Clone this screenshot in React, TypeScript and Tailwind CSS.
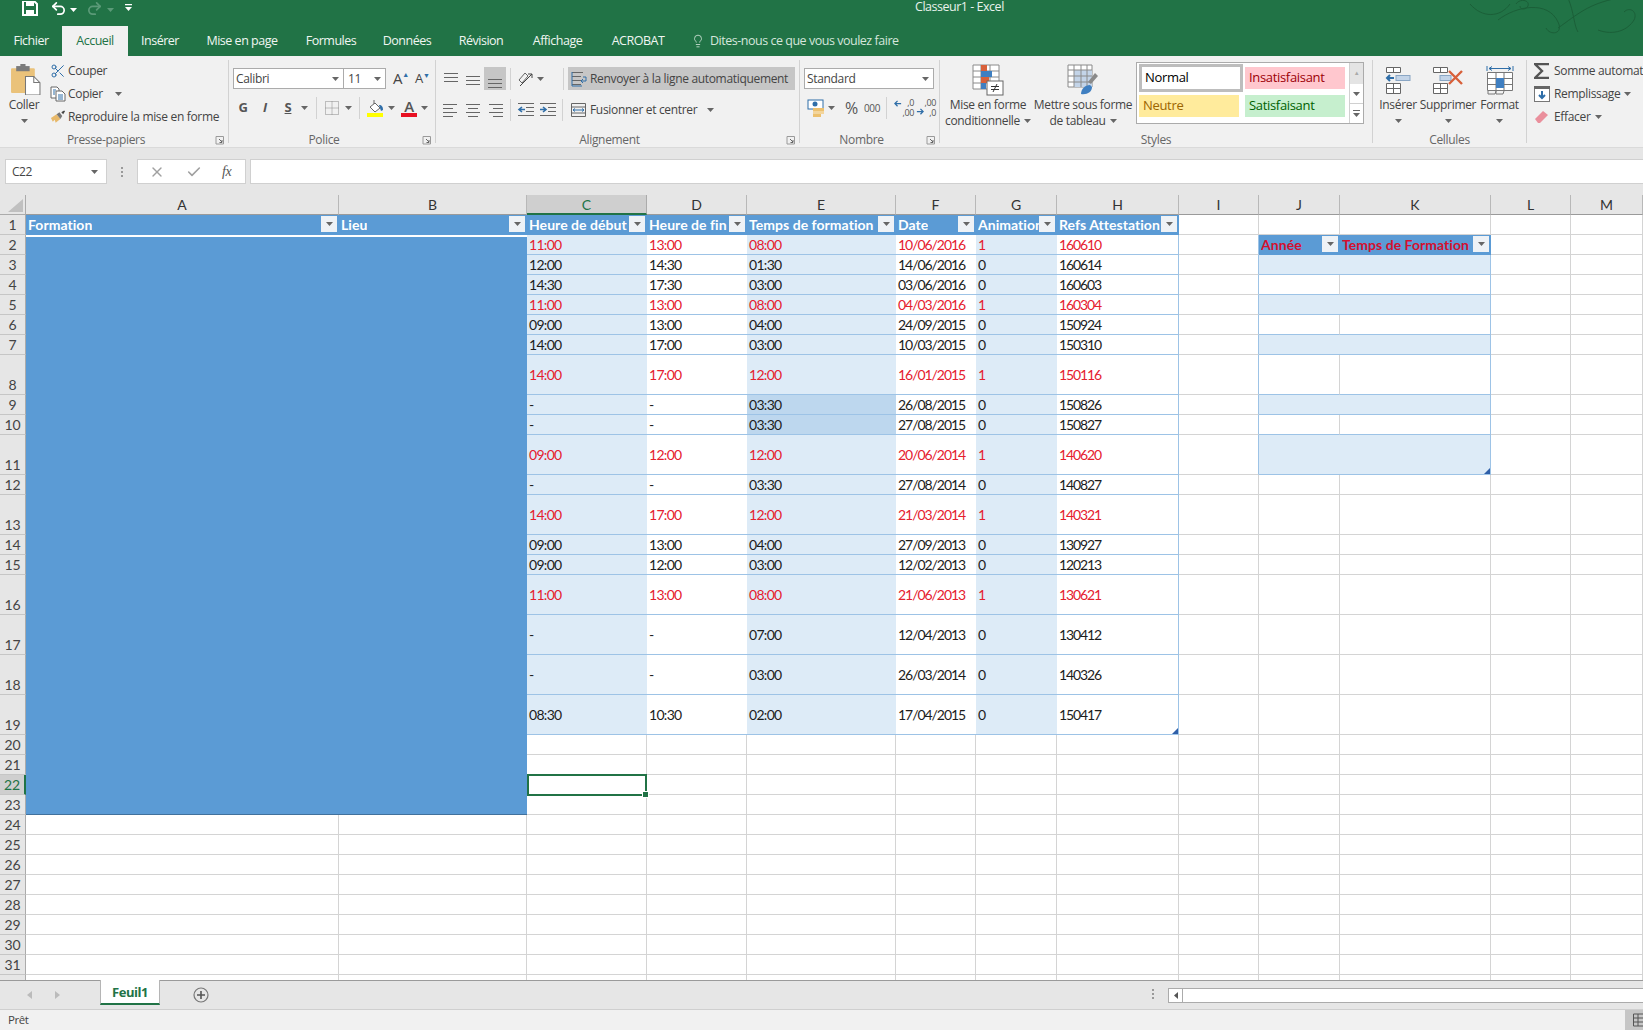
import { Check, Lightbulb, Scissors, Undo2, X } from "lucide-react";
import type { ReactNode } from "react";

type Row = { n: number; red?: boolean; vals: string[]; darkE?: boolean };

const rows: Row[] = [
  { n: 2, red: true, vals: ["11:00", "13:00", "08:00", "10/06/2016", "1", "160610"] },
  { n: 3, vals: ["12:00", "14:30", "01:30", "14/06/2016", "0", "160614"] },
  { n: 4, vals: ["14:30", "17:30", "03:00", "03/06/2016", "0", "160603"] },
  { n: 5, red: true, vals: ["11:00", "13:00", "08:00", "04/03/2016", "1", "160304"] },
  { n: 6, vals: ["09:00", "13:00", "04:00", "24/09/2015", "0", "150924"] },
  { n: 7, vals: ["14:00", "17:00", "03:00", "10/03/2015", "0", "150310"] },
  { n: 8, red: true, vals: ["14:00", "17:00", "12:00", "16/01/2015", "1", "150116"] },
  { n: 9, darkE: true, vals: ["-", "-", "03:30", "26/08/2015", "0", "150826"] },
  { n: 10, darkE: true, vals: ["-", "-", "03:30", "27/08/2015", "0", "150827"] },
  { n: 11, red: true, vals: ["09:00", "12:00", "12:00", "20/06/2014", "1", "140620"] },
  { n: 12, vals: ["-", "-", "03:30", "27/08/2014", "0", "140827"] },
  { n: 13, red: true, vals: ["14:00", "17:00", "12:00", "21/03/2014", "1", "140321"] },
  { n: 14, vals: ["09:00", "13:00", "04:00", "27/09/2013", "0", "130927"] },
  { n: 15, vals: ["09:00", "12:00", "03:00", "12/02/2013", "0", "120213"] },
  { n: 16, red: true, vals: ["11:00", "13:00", "08:00", "21/06/2013", "1", "130621"] },
  { n: 17, vals: ["-", "-", "07:00", "12/04/2013", "0", "130412"] },
  { n: 18, vals: ["-", "-", "03:00", "26/03/2014", "0", "140326"] },
  { n: 19, vals: ["08:30", "10:30", "02:00", "17/04/2015", "0", "150417"] },
];

const headers = ["Heure de début", "Heure de fin", "Temps de formation", "Date", "Animation", "Refs Attestation"];
const colLetters = ["A", "B", "C", "D", "E", "F", "G", "H", "I", "J", "K", "L", "M"];
// Lato digits run wider than the sheet's font, so each data column is tightened on its own
const colTracking = [
  "tracking-[-0.05em]",
  "tracking-[-0.05em]",
  "tracking-[-0.05em]",
  "tracking-[-0.075em]",
  "tracking-normal",
  "tracking-[-0.08em]",
];

const tabs = [
  { label: "Fichier", w: "w-[62px]" },
  { label: "Accueil", w: "w-[66px]", active: true },
  { label: "Insérer", w: "w-[64px]" },
  { label: "Mise en page", w: "w-[100px]" },
  { label: "Formules", w: "w-[78px]" },
  { label: "Données", w: "w-[74px]" },
  { label: "Révision", w: "w-[74px]" },
  { label: "Affichage", w: "w-[79px]" },
  { label: "ACROBAT", w: "w-[82px]" },
];

function Caret({ className = "" }: { className?: string }) {
  return (
    <svg width="7" height="4" viewBox="0 0 7 4" className={`shrink-0 ${className}`}>
      <path d="M0 0h7L3.5 4z" fill="#666" />
    </svg>
  );
}

function Launcher() {
  return (
    <svg width="16" height="10" viewBox="0 0 16 10" className="shrink-0">
      <path d="M4 1.5h7.5V9H4z" fill="none" stroke="#9a9a9a" />
      <path d="M7 4l3 3M10 5v2.5H7.5" fill="none" stroke="#666" />
    </svg>
  );
}

function Group({ w, label, launcher, children }: { w: string; label: string; launcher?: boolean; children: ReactNode }) {
  return (
    <section className={`${w} shrink-0 flex flex-col h-full pt-1`}>
      <div className="h-[72px] shrink-0 flex">{children}</div>
      <div className="h-4 shrink-0 flex items-center text-[12px] leading-4 text-[#666]">
        <span className="flex-1 text-center">{label}</span>
        {launcher && <Launcher />}
      </div>
    </section>
  );
}

function Sep() {
  return <div className="w-px shrink-0 my-1 bg-[#d2d2d2]" />;
}

function VSep({ className = "" }: { className?: string }) {
  return <div className={`w-px h-[22px] shrink-0 bg-[#d2d2d2] ${className}`} />;
}

function Lines({ widths, y = 4, gap = 4 }: { widths: [number, number][]; y?: number; gap?: number }) {
  return (
    <svg width="18" height="18" viewBox="0 0 18 18" className="shrink-0">
      {widths.map(([a, b], i) => (
        <path key={i} d={`M${a} ${y + i * gap + 0.5}H${b}`} stroke="#666" />
      ))}
    </svg>
  );
}

function PasteIcon() {
  return (
    <svg width="31" height="31" viewBox="0 0 30 30">
      <rect x="1" y="4" width="23" height="24" rx="1" fill="#eac27a" />
      <rect x="6" y="2" width="13" height="5" fill="#7b7b7b" />
      <rect x="10" y="0" width="5" height="4" fill="#7b7b7b" />
      <path d="M15 12h8l6 6v12H15z" fill="#fff" stroke="#777" />
      <path d="M23 12v6h6" fill="none" stroke="#777" />
    </svg>
  );
}

function CopyIcon() {
  return (
    <svg width="16" height="16" viewBox="0 0 16 16">
      <path d="M1 1h6l2 2v9H1z" fill="#fff" stroke="#666" />
      <path d="M6 5h6l3 3v7H6z" fill="#fff" stroke="#666" />
      <path d="M8 9h5M8 11h5M8 13h5M3 4h3M3 6h2M3 8h2" stroke="#2f6ea8" />
    </svg>
  );
}

function BrushIcon() {
  return (
    <svg width="17" height="16" viewBox="0 0 17 16">
      <path d="M1 9l6-4 4 5-5 4-1-3-2 2z" fill="#e8b96a" />
      <path d="M7 5l3-2 3 4-2 3z" fill="#777" />
      <path d="M12 3l3-2 1 1-2 3z" fill="#444" />
    </svg>
  );
}

function BordersIcon() {
  return (
    <svg width="16" height="16" viewBox="0 0 16 16">
      <path d="M1.5 1.5h13v13h-13zM8 1.5v13M1.5 8h13" fill="none" stroke="#888" strokeDasharray="1 1" />
    </svg>
  );
}

function FillIcon() {
  return (
    <svg width="17" height="18" viewBox="0 0 17 18">
      <path d="M7 1v4M3 8l5-4 5 5-5 4z" fill="#fff" stroke="#666" />
      <path d="M12 6c3 0 4 2 4 5l-2 1z" fill="#2f6ea8" />
      <rect x="0" y="14" width="16" height="4" fill="#ffff00" />
    </svg>
  );
}

function OrientIcon() {
  return (
    <svg width="18" height="18" viewBox="0 0 18 18">
      <path d="M3 10l6-7 3 3-6 7z" fill="none" stroke="#666" />
      <path d="M4 16L16 4M16 4h-4M16 4v4" fill="none" stroke="#444" />
    </svg>
  );
}

function IndentIcon({ out }: { out?: boolean }) {
  return (
    <svg width="18" height="16" viewBox="0 0 18 16">
      <path d="M1 1.5h16M9 5.5h8M9 9.5h8M1 13.5h16" stroke="#666" />
      <path d={out ? "M8 7.5H2M5 5L2 7.5 5 10" : "M1 7.5h6M4 5l3 2.5L4 10"} fill="none" stroke="#2f6ea8" strokeWidth="1.6" />
    </svg>
  );
}

function WrapIcon() {
  return (
    <svg width="17" height="16" viewBox="0 0 17 16">
      <path d="M1 1.5h11M1 5.5h9M1 9.5h9M1 13.5h9" stroke="#666" />
      <path d="M1 1v14h10M12 6h3v4h-5M12 8l-2 2 2 2" fill="none" stroke="#2f6ea8" />
    </svg>
  );
}

function MergeIcon() {
  return (
    <svg width="17" height="16" viewBox="0 0 17 16">
      <path d="M1.5 1.5h14v13h-14zM1.5 5h14M1.5 11h14" fill="none" stroke="#666" />
      <path d="M3 8h11M5 6.5L3 8l2 1.5M12 6.5L14 8l-2 1.5" fill="none" stroke="#2f6ea8" />
    </svg>
  );
}

function CurrencyIcon() {
  return (
    <svg width="18" height="18" viewBox="0 0 18 18">
      <rect x="1" y="1" width="15" height="9" fill="#fff" stroke="#2f6ea8" />
      <circle cx="8" cy="5" r="2.5" fill="#2f6ea8" />
      <rect x="6" y="9" width="11" height="3" fill="#ecc06e" />
      <rect x="6" y="12" width="11" height="3" fill="#f3d59c" />
      <rect x="6" y="15" width="8" height="3" fill="#ecc06e" />
    </svg>
  );
}

function DecimalIcon({ more }: { more?: boolean }) {
  return (
    <div className="w-[20px] flex items-stretch">
      <svg width="8" height="20" viewBox="0 0 9 20" className="shrink-0">
        {more ? (
          <path d="M1 14h7M5 11l3 3-3 3" fill="none" stroke="#2f6ea8" strokeWidth="1.4" />
        ) : (
          <path d="M8 5H1M4 2L1 5l3 3" fill="none" stroke="#2f6ea8" strokeWidth="1.4" />
        )}
      </svg>
      <div className="flex flex-col items-end flex-1 text-[9px] leading-[10px] text-[#555]">
        <span>{more ? ",00" : ",0"}</span>
        <span>{more ? ",0" : ",00"}</span>
      </div>
    </div>
  );
}

function CondIcon() {
  return (
    <svg width="32" height="32" viewBox="0 0 32 32">
      <path d="M1 1h26v24H1zM9 1v24M18 1v24M1 7h26M1 13h26M1 19h26" fill="#fff" stroke="#8a8a8a" />
      <rect x="9" y="1" width="6" height="6" fill="#d8603a" />
      <rect x="9" y="7" width="11" height="6" fill="#3f7fc1" />
      <rect x="9" y="13" width="8" height="6" fill="#d8603a" />
      <rect x="9" y="19" width="5" height="6" fill="#3f7fc1" />
      <rect x="15" y="17" width="16" height="14" fill="#fff" stroke="#666" />
      <path d="M19 22.5h8M19 25.5h8M25 20l-4 8" fill="none" stroke="#333" />
    </svg>
  );
}

function TableIcon() {
  return (
    <svg width="32" height="32" viewBox="0 0 32 32">
      <path d="M1 1h24v22H1z" fill="#fff" stroke="#8a8a8a" />
      <rect x="7" y="6" width="18" height="17" fill="#c3d4e8" />
      <path d="M1 6h24M1 12h24M1 18h24M7 1v22M14 1v22M20 1v22" stroke="#8a8a8a" fill="none" />
      <path d="M21 18l7-9 3 3-7 8z" fill="#8a8a8a" />
      <path d="M14 30c0-5 4-9 9-9l2 2c0 5-5 8-11 7z" fill="#3f7fc1" />
    </svg>
  );
}

function InsertIcon() {
  return (
    <svg width="26" height="28" viewBox="0 0 26 28">
      <path d="M1.5 1.5h14v5h-14zM8.5 1.5v5M1.5 17.5h14v10h-14zM8.5 17.5v10M1.5 22.5h14" fill="#fff" stroke="#666" />
      <rect x="11" y="9.5" width="14" height="5" fill="#c3d4e8" stroke="#8aa6c4" />
      <path d="M2 12h7M5 9l-3 3 3 3" fill="none" stroke="#2f6ea8" strokeWidth="2" />
    </svg>
  );
}

function DeleteIcon() {
  return (
    <svg width="32" height="28" viewBox="0 0 32 28">
      <path d="M1.5 1.5h14v5h-14zM8.5 1.5v5M1.5 17.5h14v10h-14zM8.5 17.5v10M1.5 22.5h14" fill="#fff" stroke="#666" />
      <rect x="8" y="9.5" width="11" height="5" fill="#c3d4e8" stroke="#8aa6c4" />
      <path d="M17 5l13 13M30 5L17 18" stroke="#d8603a" strokeWidth="2.4" />
    </svg>
  );
}

function FormatIcon() {
  return (
    <svg width="28" height="30" viewBox="0 0 28 30">
      <path d="M1 1v5M27 1v5M3 3.5h22M3 3.5l3-2M3 3.5l3 2M25 3.5l-3-2M25 3.5l-3 2" fill="none" stroke="#2f6ea8" />
      <path d="M1.5 7.5h25v18h-25zM10 7.5v18M18 7.5v18M1.5 13.5h25M1.5 19.5h25" fill="#fff" stroke="#777" />
      <rect x="10" y="13" width="8" height="10" fill="#3f7fc1" />
      <path d="M2 26v3h7l1-3M10 26v3h7l1-3" fill="none" stroke="#777" />
    </svg>
  );
}

function FillDownIcon() {
  return (
    <svg width="16" height="16" viewBox="0 0 16 16">
      <rect x="0.5" y="0.5" width="15" height="15" fill="#fff" stroke="#777" />
      <rect x="0" y="0" width="16" height="3" fill="#666" />
      <path d="M8 5v7M5 9l3 3 3-3" fill="none" stroke="#2f6ea8" strokeWidth="2" />
    </svg>
  );
}

function EraserIcon() {
  return (
    <svg width="16" height="16" viewBox="0 0 16 16">
      <path d="M1 10l8-8 5 4-8 8H4z" fill="#ea8f9c" />
    </svg>
  );
}

function SigmaIcon() {
  return (
    <svg width="16" height="16" viewBox="0 0 16 16">
      <path d="M15 1H1l7 7-7 7h14" fill="none" stroke="#555" strokeWidth="2.4" />
    </svg>
  );
}

function Swirl() {
  return (
    <svg width="175" height="40" viewBox="0 0 175 40" className="absolute right-0 top-0" fill="none" stroke="#1b5f38">
      <path d="M2 4c12 14 30 14 40 0M30 20c18-14 50-20 60 2 6 12-8 14-12 6M90 28C110 14 120 4 150 -2M100 -2c6 14 6 28 10 34M130 30c16 6 30 0 36-10 4-8-4-14-10-8M48 4c4-6 14-4 12 2-2 4-8 4-8 0" />
    </svg>
  );
}

function ActionRow({ icon, children }: { icon: ReactNode; children: ReactNode }) {
  return (
    <div className="h-[23px] flex items-center whitespace-nowrap">
      <span className="w-4 h-4 flex items-center justify-center shrink-0 mr-[2px]">{icon}</span>
      {children}
    </div>
  );
}

function BigButton({ w, icon, lines, caretBelow }: { w: string; icon: ReactNode; lines: string[]; caretBelow?: boolean }) {
  return (
    <div className={`${w} flex flex-col items-center shrink-0 whitespace-nowrap`}>
      <div className="h-[32px] mt-1 flex items-center justify-center">{icon}</div>
      {lines.map((l, i) => (
        <div key={l} className={`h-4 leading-4 flex items-center gap-1 ${i === 0 ? "mt-[1px]" : ""}`}>
          {l}
          {!caretBelow && i === lines.length - 1 && <Caret />}
        </div>
      ))}
      {caretBelow && <Caret className="mt-[6px]" />}
    </div>
  );
}

function Ribbon() {
  return (
    <div className="h-[92px] flex bg-[#f1f1f1] text-[12px] text-[#444] border-b border-[#dadada] tracking-[-0.027em]">
      <Group w="w-[228px]" label="Presse-papiers" launcher>
        <div className="w-[48px] flex flex-col items-center">
          <div className="mt-[4px] ml-[2px] h-[30px]"><PasteIcon /></div>
          <div className="mt-[3px] leading-4">Coller</div>
          <Caret className="mt-[6px]" />
        </div>
        <div className="ml-[2px] -mt-px flex flex-col">
          <ActionRow icon={<Scissors size={16} color="#2f6ea8" strokeWidth={1.5} />}>Couper</ActionRow>
          <ActionRow icon={<CopyIcon />}>
            Copier
            <Caret className="ml-3" />
          </ActionRow>
          <ActionRow icon={<BrushIcon />}>Reproduire la mise en forme</ActionRow>
        </div>
      </Group>
      <Sep />
      <Group w="w-[206px]" label="Police" launcher>
        <div className="flex flex-col">
          <div className="mt-2 ml-1 flex items-center h-[21px]">
            <div className="w-[111px] h-[21px] pl-[2px] pr-1 flex items-center justify-between bg-white border border-[#ababab]">
              Calibri
              <Caret />
            </div>
            <div className="w-[42px] h-[21px] pl-1 pr-1 flex items-center justify-between bg-white border border-l-0 border-[#ababab]">
              11
              <Caret />
            </div>
            <div className="ml-[7px] w-[22px] text-[15px] leading-none flex items-start">
              A<span className="text-[7px] leading-none text-[#2f6ea8]">▲</span>
            </div>
            <div className="w-[22px] text-[13px] leading-none flex items-start">
              A<span className="text-[7px] leading-none text-[#2f6ea8]">▼</span>
            </div>
          </div>
          <div className="mt-[7px] ml-1 h-6 flex items-center">
            <span className="w-5 text-center font-bold text-[13px] text-[#555]">G</span>
            <span className="w-6 text-center italic font-bold text-[13px] text-[#555]">I</span>
            <span className="w-[22px] text-center underline font-bold text-[13px] text-[#555]">S</span>
            <Caret className="ml-[2px]" />
            <VSep className="ml-[8px]" />
            <span className="ml-[7px]"><BordersIcon /></span>
            <Caret className="ml-[5px]" />
            <VSep className="ml-[7px]" />
            <span className="ml-[7px]"><FillIcon /></span>
            <Caret className="ml-[4px]" />
            <div className="ml-[6px] w-[16px] flex flex-col items-center">
              <span className="text-[15px] leading-[14px] font-semibold text-[#555]">A</span>
              <span className="w-full h-1 bg-[#e81123]" />
            </div>
            <Caret className="ml-[4px]" />
          </div>
        </div>
      </Group>
      <Sep />
      <Group w="w-[363px]" label="Alignement" launcher>
        <div className="flex flex-col">
          <div className="mt-[7px] ml-1 h-[23px] flex items-center">
            <span className="w-[22px] flex justify-center"><Lines y={3} widths={[[2, 16], [2, 16], [2, 16]]} /></span>
            <span className="w-[22px] flex justify-center"><Lines y={6} widths={[[2, 16], [2, 16], [2, 16]]} /></span>
            <span className="w-[22px] h-[23px] bg-[#c6c6c6] flex justify-center items-center"><Lines y={9} widths={[[2, 16], [2, 16], [2, 16]]} /></span>
            <VSep className="ml-[4px]" />
            <span className="ml-[5px]"><OrientIcon /></span>
            <Caret className="ml-[3px]" />
            <VSep className="ml-[19px]" />
            <div className="ml-[4px] w-[227px] h-[23px] pl-[3px] bg-[#c6c6c6] flex items-center whitespace-nowrap gap-[2px]">
              <WrapIcon />
              <span>Renvoyer à la ligne automatiquement</span>
            </div>
          </div>
          <div className="mt-[8px] ml-1 h-6 flex items-center">
            <span className="w-[22px] flex justify-center"><Lines widths={[[1, 15], [1, 11], [1, 15], [1, 11]]} y={3} /></span>
            <span className="w-[22px] flex justify-center"><Lines widths={[[2, 16], [4, 14], [2, 16], [4, 14]]} y={3} /></span>
            <span className="w-[22px] flex justify-center"><Lines widths={[[3, 17], [7, 17], [3, 17], [7, 17]]} y={3} /></span>
            <VSep className="ml-[4px]" />
            <span className="ml-[6px]"><IndentIcon out /></span>
            <span className="ml-[4px]"><IndentIcon /></span>
            <VSep className="ml-[5px]" />
            <div className="ml-[7px] flex items-center whitespace-nowrap gap-[2px]">
              <MergeIcon />
              <span className="ml-[1px]">Fusionner et centrer</span>
              <Caret className="ml-2" />
            </div>
          </div>
        </div>
      </Group>
      <Sep />
      <Group w="w-[139px]" label="Nombre" launcher>
        <div className="flex flex-col">
          <div className="mt-2 ml-1 w-[130px] h-[21px] pl-[2px] pr-1 flex items-center justify-between bg-white border border-[#ababab]">
            Standard
            <Caret />
          </div>
          <div className="mt-[7px] ml-[7px] h-6 flex items-center">
            <CurrencyIcon />
            <Caret className="ml-[3px]" />
            <span className="ml-[10px] text-[16px] leading-none text-[#555]">%</span>
            <span className="ml-[6px] text-[10px] text-[#555]">000</span>
            <VSep className="ml-[6px]" />
            <span className="ml-[7px]"><DecimalIcon /></span>
            <span className="ml-[2px]"><DecimalIcon more /></span>
          </div>
        </div>
      </Group>
      <Sep />
      <Group w="w-[432px]" label="Styles">
        <BigButton w="w-[96px]" icon={<CondIcon />} lines={["Mise en forme", "conditionnelle"]} />
        <BigButton w="w-[94px]" icon={<TableIcon />} lines={["Mettre sous forme", "de tableau"]} />
        <div className="mt-[2px] ml-[6px] w-[228px] h-[62px] flex bg-white border border-[#ababab]">
          <div className="flex-1 grid grid-cols-[106px_100px] grid-rows-[31px_28px] text-[13px] pl-[2px] pt-[1px]">
            <div className="w-[104px] h-[28px] border-[3px] border-[#bdbdbd] flex items-center pl-[3px] text-black">Normal</div>
            <div className="w-[100px] h-[22px] mt-[3px] bg-[#ffc7ce] flex items-center pl-[4px] text-[#9c0006]">Insatisfaisant</div>
            <div className="w-[100px] h-[22px] bg-[#ffeb9c] flex items-center pl-[4px] text-[#9c6500]">Neutre</div>
            <div className="w-[100px] h-[22px] bg-[#c6efce] flex items-center pl-[4px] text-[#006100]">Satisfaisant</div>
          </div>
          <div className="w-[14px] flex flex-col border-l border-[#d0d0d0]">
            <div className="h-[21px] bg-[#e4e4e4] flex items-center justify-center text-[6px] text-[#aaa]">▲</div>
            <div className="h-[19px] flex items-center justify-center"><Caret /></div>
            <div className="flex-1 border-t border-[#d0d0d0] flex flex-col items-center justify-center gap-[2px]">
              <div className="w-[7px] h-px bg-[#666]" />
              <Caret />
            </div>
          </div>
        </div>
      </Group>
      <Sep />
      <Group w="w-[153px]" label="Cellules">
        <BigButton w="w-[50px]" icon={<InsertIcon />} lines={["Insérer"]} caretBelow />
        <BigButton w="w-[50px]" icon={<DeleteIcon />} lines={["Supprimer"]} caretBelow />
        <BigButton w="w-[53px]" icon={<FormatIcon />} lines={["Format"]} caretBelow />
      </Group>
      <Sep />
      <div className="flex-1 pt-[3px] pl-[7px] overflow-hidden">
        <ActionRow icon={<SigmaIcon />}>
          <span className="ml-[2px]">Somme automatique</span>
        </ActionRow>
        <ActionRow icon={<FillDownIcon />}>
          <span className="ml-[2px]">Remplissage</span>
          <Caret className="ml-1" />
        </ActionRow>
        <ActionRow icon={<EraserIcon />}>
          <span className="ml-[2px]">Effacer</span>
          <Caret className="ml-1" />
        </ActionRow>
      </div>
    </div>
  );
}

function FilterBtn() {
  return (
    <span className="w-4 h-4 shrink-0 mr-[2px] flex items-center justify-center bg-[#eef2f6]">
      <Caret />
    </span>
  );
}

function HeadCell({ label, red }: { label: string; red?: boolean }) {
  return (
    <div className={`min-w-0 flex items-center justify-between bg-[#5b9bd5] pl-[2px] pb-[2px] font-bold text-[14px] tracking-[0.003em] ${red ? "text-[#d40f2e]" : "text-white"}`}>
      <span className="overflow-hidden whitespace-nowrap min-w-0">{label}</span>
      <FilterBtn />
    </div>
  );
}

function ResizeMark() {
  return (
    <svg width="6" height="6" viewBox="0 0 6 6" className="absolute right-0 bottom-0">
      <path d="M6 0v6H0z" fill="#2f5fa8" />
    </svg>
  );
}

function RowHead({ n }: { n: number }) {
  return (
    <div
      className={`flex items-end justify-center text-[14px] leading-[19px] border-b border-[#c6c6c6] ${
        n === 22 ? "bg-[#cfcfcf] text-[#217346] border-r-2 border-r-[#217346]" : "bg-[#e6e6e6] text-[#444] border-r border-r-[#ababab]"
      }`}
    >
      {n < 32 && n}
    </div>
  );
}

const grid = "border-r border-b border-[#d4d4d4]";

function RightCells({ n }: { n: number }) {
  const inTable = n >= 2 && n <= 11;
  const band = n === 3 || n === 5 || n === 7 || n === 9 || n === 11;
  return (
    <>
      <div className={`border-b border-b-[#d4d4d4] border-r ${inTable ? "border-r-[#9dc3e6]" : "border-r-[#d4d4d4]"}`} />
      {n === 2 ? (
        <>
          <HeadCell label="Année" red />
          <HeadCell label="Temps de Formation" red />
        </>
      ) : inTable ? (
        <>
          <div className={`border-b border-b-[#9dc3e6] ${band ? "bg-[#ddebf7]" : "border-r border-r-[#d4d4d4]"}`} />
          <div className={`relative border-b border-r border-[#9dc3e6] ${band ? "bg-[#ddebf7]" : ""}`}>{n === 11 && <ResizeMark />}</div>
        </>
      ) : (
        <>
          <div className={grid} />
          <div className={grid} />
        </>
      )}
      <div className={grid} />
      <div className={grid} />
    </>
  );
}

function DataRow({ row }: { row: Row }) {
  const color = row.red ? "text-[#e5202e]" : "text-[#1c1c1c]";
  return (
    <>
      <RowHead n={row.n} />
      {row.vals.map((v, i) => {
        const banded = i % 2 === 0;
        const bg = row.darkE && i === 2 ? "bg-[#bdd7ee]" : banded ? "bg-[#ddebf7]" : "bg-white";
        return (
          <div
            key={i}
            className={`relative flex items-center pl-[2px] text-[14px] ${colTracking[i]} border-b border-b-[#9dc3e6] ${bg} ${color} ${i === 5 ? "border-r border-r-[#9dc3e6]" : ""}`}
          >
            {v}
            {row.n === 19 && i === 5 && <ResizeMark />}
          </div>
        );
      })}
      <RightCells n={row.n} />
    </>
  );
}

function EmptyRow({ n }: { n: number }) {
  const cols = n >= 24 ? 13 : 11;
  return (
    <>
      <RowHead n={n} />
      {Array.from({ length: cols }, (_, i) => {
        const selected = n === 22 && i === 0;
        return selected ? (
          <div key={i} className="relative z-10 -my-px border-2 border-[#217346] bg-white">
            <span className="absolute -right-[4px] -bottom-[4px] w-[7px] h-[7px] bg-[#217346] border border-white" />
          </div>
        ) : (
          <div key={i} className={grid} />
        );
      })}
    </>
  );
}

function Sheet() {
  const empties = Array.from({ length: 13 }, (_, i) => 20 + i);
  return (
    <div className="h-[786px] overflow-hidden border-b border-[#9a9a9a] bg-white tracking-normal font-['Lato','Liberation_Sans',sans-serif]">
      <div className="grid grid-cols-[26px_313px_188px_120px_100px_149px_80px_81px_122px_80px_81px_151px_80px_72px] grid-rows-[20px_repeat(7,20px)_40px_20px_20px_40px_20px_40px_20px_20px_repeat(4,40px)_repeat(13,20px)]">
        <div className="bg-[#e6e6e6] border-r border-b border-[#ababab] flex items-end justify-end p-[2px]">
          <svg width="15" height="13" viewBox="0 0 15 13">
            <path d="M15 0v13H0z" fill="#c0c0c0" />
          </svg>
        </div>
        {colLetters.map((c, i) => (
          <div
            key={c}
            className={`flex items-center justify-center text-[14px] ${
              i === 2
                ? "bg-[#cfcfcf] text-[#217346] border-b-2 border-b-[#217346] border-r border-r-[#ababab]"
                : "bg-[#e6e6e6] text-[#333] border-b border-b-[#9a9a9a] border-r border-r-[#b8b8b8]"
            }`}
          >
            {c}
          </div>
        ))}
        <RowHead n={1} />
        <HeadCell label="Formation" />
        <HeadCell label="Lieu" />
        {headers.map((h) => (
          <HeadCell key={h} label={h} />
        ))}
        <div className={grid} />
        <div className={grid} />
        <div className={grid} />
        <div className={grid} />
        <div className={grid} />
        <div className="col-start-2 col-span-2 row-start-3 row-span-22 bg-[#5b9bd5] border-b border-b-[#41719c] border-t-2 border-t-white" />
        {rows.map((r) => (
          <DataRow key={r.n} row={r} />
        ))}
        {empties.map((n) => (
          <EmptyRow key={n} n={n} />
        ))}
      </div>
    </div>
  );
}

export default function App() {
  return (
    <div className="w-[1643px] h-[1030px] overflow-hidden flex flex-col bg-[#f1f1f1] font-['Open_Sans','Noto_Sans',sans-serif] tracking-[-0.03em]">
      <header className="relative h-[26px] bg-[#217346] flex items-start text-white">
        <svg width="16" height="15" viewBox="0 0 16 15" className="ml-[22px] mt-[1px]">
          <path d="M1 0h11l3 3v11H1z" fill="none" stroke="#fff" strokeWidth="2" />
          <rect x="4" y="0" width="8" height="5" fill="#fff" />
          <rect x="4" y="9" width="8" height="5" fill="#fff" />
        </svg>
        <Undo2 size={17} strokeWidth={2.4} className="ml-3" />
        <svg width="7" height="4" viewBox="0 0 7 4" className="ml-[3px] mt-2"><path d="M0 0h7L3.5 4z" fill="#fff" /></svg>
        <Undo2 size={17} strokeWidth={2.4} color="#5b9a78" className="ml-[9px] -scale-x-100" />
        <svg width="7" height="4" viewBox="0 0 7 4" className="ml-1 mt-2"><path d="M0 0h7L3.5 4z" fill="#5b9a78" /></svg>
        <svg width="7" height="8" viewBox="0 0 7 8" className="ml-[11px] mt-[4px]">
          <path d="M0 0h7v1.2H0zM0 3h7L3.5 7z" fill="#fff" />
        </svg>
        <div className="ml-[783px] text-[12.5px] leading-[14px] whitespace-nowrap text-[#e8f2ec]">Classeur1 - Excel</div>
        <Swirl />
      </header>
      <nav className="h-[30px] bg-[#217346] flex items-stretch text-[12.5px] text-[#f0f6f2]">
        {tabs.map((t) => (
          <div
            key={t.label}
            className={`${t.w} flex items-center justify-center whitespace-nowrap ${t.active ? "bg-[#f1f1f1] text-[#217346]" : ""}`}
          >
            {t.label}
          </div>
        ))}
        <div className="ml-[12px] flex items-center gap-[5px] whitespace-nowrap text-[#d5e6dc]">
          <Lightbulb size={14} strokeWidth={1.4} />
          Dites-nous ce que vous voulez faire
        </div>
      </nav>
      <Ribbon />
      <div className="h-[47px] bg-[#e6e6e6] pt-[11px]">
        <div className="h-[25px] flex items-stretch text-[12px] text-[#444]">
          <div className="ml-[5px] w-[102px] bg-white border border-[#d0d0d0] pl-[6px] pr-2 flex items-center justify-between">
            C22
            <Caret />
          </div>
          <div className="w-[30px] flex flex-col items-center justify-center gap-[2px]">
            <span className="w-[2px] h-[2px] bg-[#999]" />
            <span className="w-[2px] h-[2px] bg-[#999]" />
            <span className="w-[2px] h-[2px] bg-[#999]" />
          </div>
          <div className="w-[109px] bg-white border border-[#d0d0d0] flex items-center">
            <X size={16} color="#a0a0a0" strokeWidth={2} className="ml-[11px]" />
            <Check size={16} color="#a0a0a0" strokeWidth={2.4} className="ml-[21px]" />
            <span className="ml-[20px] font-['Liberation_Serif',serif] italic text-[14px] text-[#555]">fx</span>
          </div>
          <div className="ml-[4px] flex-1 bg-white border-y border-l border-[#d0d0d0]" />
        </div>
      </div>
      <Sheet />
      <div className="h-[28px] bg-[#e6e6e6] flex items-stretch">
        <svg width="5" height="8" viewBox="0 0 5 8" className="ml-[27px] mt-[10px]"><path d="M5 0v8L0 4z" fill="#bbb" /></svg>
        <svg width="5" height="8" viewBox="0 0 5 8" className="ml-[23px] mt-[10px]"><path d="M0 0v8l5-4z" fill="#bbb" /></svg>
        <div className="ml-[40px] w-[60px] h-[25px] pt-[2px] bg-white border-x border-[#b5b5b5] border-b-2 border-b-[#217346] -mt-px flex items-center justify-center font-bold text-[13px] text-[#217346]">
          Feuil1
        </div>
        <svg width="16" height="16" viewBox="0 0 16 16" className="ml-[33px] mt-[6px]">
          <circle cx="8" cy="8" r="7" fill="none" stroke="#777" strokeWidth="1.2" />
          <path d="M8 4v8M4 8h8" stroke="#555" strokeWidth="1.6" />
        </svg>
        <div className="ml-[943px] mt-[8px] flex flex-col gap-[2px]">
          <span className="w-[2px] h-[2px] bg-[#999]" />
          <span className="w-[2px] h-[2px] bg-[#999]" />
          <span className="w-[2px] h-[2px] bg-[#999]" />
        </div>
        <div className="ml-[14px] mt-[7px] h-[15px] flex-1 flex bg-white border-y border-[#ababab]">
          <div className="w-[15px] border-x border-[#ababab] flex items-center justify-center">
            <svg width="4" height="7" viewBox="0 0 4 7"><path d="M4 0v7L0 3.5z" fill="#555" /></svg>
          </div>
        </div>
      </div>
      <footer className="flex-1 border-t border-[#cfcfcf] bg-[#f1f1f1] flex items-center justify-between text-[11.5px] text-[#444]">
        <span className="ml-2">Prêt</span>
        <div className="w-[18px] h-full bg-[#c6c6c6] flex items-center justify-end">
          <svg width="10" height="14" viewBox="0 0 10 14"><path d="M.5 1h12v12H.5zM.5 5h12M.5 9h12M5 1v12" fill="none" stroke="#555" /></svg>
        </div>
      </footer>
    </div>
  );
}
